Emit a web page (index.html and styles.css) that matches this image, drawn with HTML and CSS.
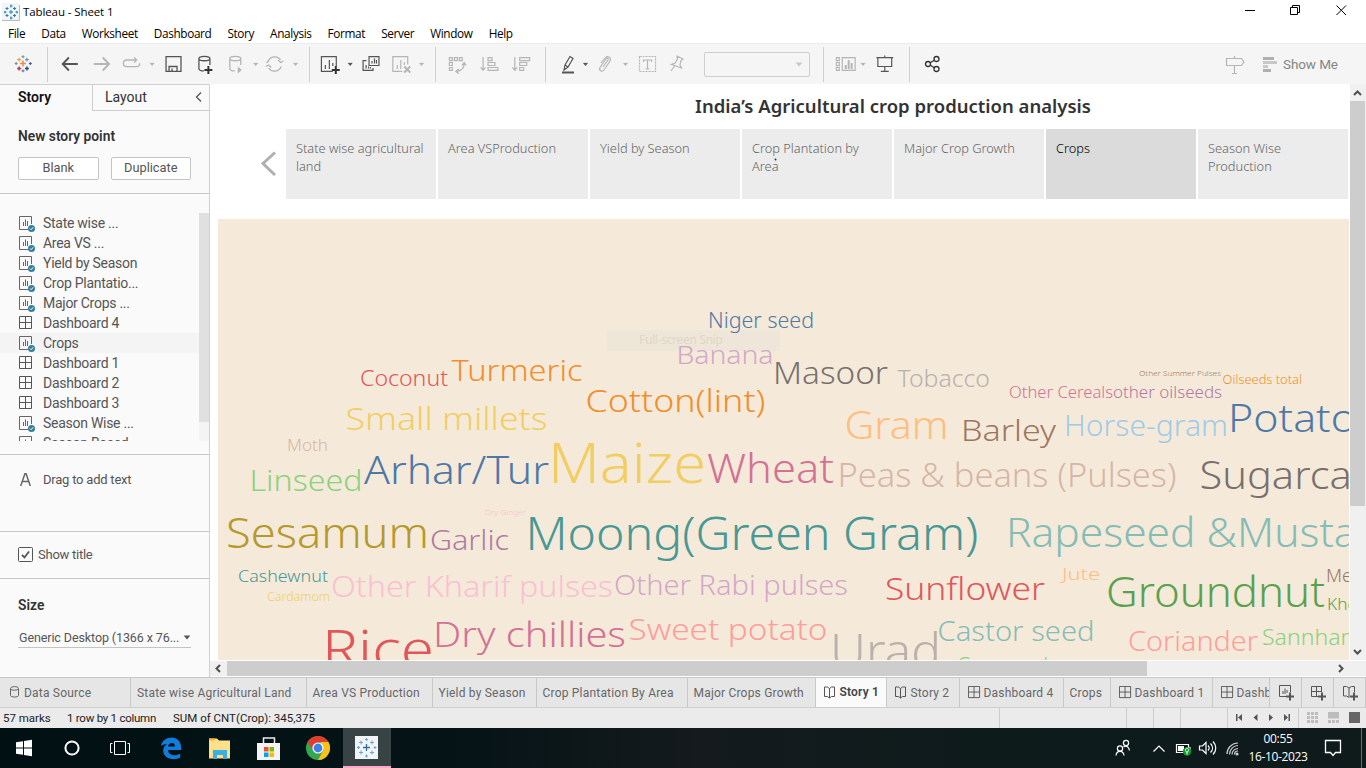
FILE: index.html
```html
<!DOCTYPE html>
<html lang="en">
<head>
<meta charset="utf-8">
<title>Tableau - Sheet 1</title>
<link rel="stylesheet" href="styles.css">
</head>
<body>
<svg class="defs" width="0" height="0">
  <defs>
    <symbol id="sheet" viewBox="0 0 17 17"><path d="M9 13.500H.5V.500h12V8" fill="none" stroke="#666"/><path d="M4.500 6v4M6.500 3.500V10M8.500 5v5" stroke="#666"/><circle cx="12.500" cy="12.500" r="3.500" fill="#367e9f"/><path d="M11 12.500l1.200 1.200 2-2.400" stroke="#fff" fill="none"/></symbol>
    <symbol id="dash" viewBox="0 0 17 17"><path d="M.5.500h12v12H.500zM6.500.500v12M.500 6.500h12" fill="none" stroke="#555"/></symbol>
    <symbol id="book" viewBox="0 0 12 13"><path d="M.5 1h3l2 1.500 2-1.500h3v9.500h-3l-2 1.500-2-1.500h-3zM5.500 2.500V12" fill="none" stroke="#555"/></symbol>
    <symbol id="caret" viewBox="0 0 6 4"><path d="M.3.300h5.400L3 3.600z"/></symbol>
  </defs>
</svg>
<div class="app">
  <header class="titlebar">
    <svg width="18" height="18" viewBox="0 0 18 18"><path d="M0 0h17v17H0z" fill="#f2f5f7"/><path d="M17.500 2v15.500H0" fill="none" stroke="#bbb"/><path d="M7 9h4M9 7v4M3.500 5.500h3M5 4v3M11 5.500h3M12.500 4v3M3.500 12.500h3M5 11v3M11 12.500h3M12.500 11v3M2 9h2.500M3 8v2.500M13.500 9H16M15 8v2.500M8 3h2.500M9 1.500V4.500M8 15h2.500M9 13.500v3" stroke="#2f7cab"/></svg>
    <span class="apptitle">Tableau - Sheet 1</span>
    <svg class="winctl" width="110" height="22" viewBox="1240 0 110 22" fill="none" stroke="#000"><path d="M1245 10.500h10M1290.500 7.500h7v7h-7zM1292.500 7V5.500h7v7H1298M1336.500 5.500l9.500 9.500M1346 5.500l-9.500 9.500"/></svg>
  </header>
  <nav class="menu"><span>File</span><span>Data</span><span>Worksheet</span><span>Dashboard</span><span>Story</span><span>Analysis</span><span>Format</span><span>Server</span><span>Window</span><span>Help</span></nav>

  <div class="toolbar">
    <svg class="grp" width="48" height="35" viewBox="0 47 48 35" fill="none" stroke-width="1.200"><path d="M20.500 63.500h6M23.500 60.500v6" stroke="#eb8a44" stroke-width="1.500"/><path d="M17.500 59.500h4M19.500 57.500v4" stroke="#eba045"/><path d="M25.500 59.500h4M27.500 57.500v4" stroke="#7c91b0"/><path d="M17.500 68.500h4M19.500 66.500v4" stroke="#c0334a" stroke-width="1.500"/><path d="M25.500 68.500h4M27.500 66.500v4" stroke="#2b487c" stroke-width="1.500"/><path d="M15 63.500h3M16.500 62v3" stroke="#5c9ba6"/><path d="M29.500 63.500h3M31 62v3" stroke="#4a5a9a"/><path d="M22 56.500h3M23.500 55v3" stroke="#6aa3ad"/><path d="M22 71h3M23.500 69.500v3" stroke="#7277b5"/></svg>
    <svg class="grp" width="262" height="35" viewBox="48 47 262 35" fill="none" stroke="#b5b5b5" stroke-width="1.300">
      <path d="M78 64H63M69 57.500L62.700 64 69 70.500" stroke="#555" stroke-width="1.900"/>
      <path d="M94 64h15M103 57.500l6.300 6.500-6.300 6.500" stroke-width="1.900"/>
      <path d="M133 60h-6a3.300 3.300 0 0 0 0 6.700h10a3.300 3.300 0 0 0 3-3.500M131 60h6M134.500 57.500L137 60l-2.500 2.500"/>
      <path d="M166.500 56.500h15v15h-15zM169.500 71v-4.500h8V71M172.500 68.500V71" stroke="#555"/>
      <path d="M199.500 58.500v10c0 1.500 2 2.500 5 2.500M210.500 58.500V65M199.500 58.500c0-3 11-3 11 0s-11 3-11 0" stroke="#555"/><path d="M205 70h8M209 66v8" stroke="#333" stroke-width="2"/>
      <path d="M230.500 58.500v10c0 1.500 2 2.500 5 2.500M241.500 58.500V65M230.500 58.500c0-3 11-3 11 0s-11 3-11 0"/><path d="M238.500 66.500v7l4-3.500z" fill="#b5b5b5" stroke="none"/>
      <path d="M269 61.500a7 7 0 0 1 12.500-1.500M282 66.500a7 7 0 0 1-12.500 1.500M267.500 63l1.500-2M266.500 66.500l3-1.500 2.500 2.500M284.500 61l-3 1.500-2.500-2.500"/>
      <g stroke="none" fill="#b5b5b5"><use href="#caret" x="149.500" y="62.500" width="6" height="4"/><use href="#caret" x="253.500" y="62.500" width="6" height="4"/><use href="#caret" x="293.500" y="62.500" width="6" height="4"/></g>
    </svg>
    <svg class="grp" width="126" height="35" viewBox="310 47 126 35" fill="none" stroke="#555" stroke-width="1.200">
      <path d="M333 71.500h-11.500v-15h15v10M325.500 65v4M329.500 60v9M333 63v3"/><path d="M332 70h8M336 66v8" stroke="#333" stroke-width="2"/>
      <path d="M369.500 56.500h10v9h-10zM372.500 61v2.500M375 58.500v5M377 60v3.500M367 60.500h-3.500v10h10V68M366.500 65v3.500M369 66.500v2M371 67v1.500"/>
      <g stroke="#b5b5b5"><path d="M403 71.500h-9.500v-15h15v8M398 65v4M401.500 60v9M405 62v3"/><path d="M405 66.500l6 6M411 66.500l-6 6" stroke-width="2"/></g>
      <g stroke="none"><use href="#caret" x="347.500" y="62.500" width="6" height="4" fill="#555"/><use href="#caret" x="419.500" y="62.500" width="6" height="4" fill="#b5b5b5"/></g>
    </svg>
    <svg class="grp" width="110" height="35" viewBox="436 47 110 35" fill="none" stroke="#b5b5b5" stroke-width="1.200">
      <path d="M449.500 57.500h3v3h-3zM454.500 57.500h3v3h-3zM459.500 57.500h3v3h-3zM449.500 62.500h3v3h-3zM449.500 67.500h3v3h-3zM464.500 63c0 5-3 8-8 8.500M462 65.500l2.500-3 2 3M459 69l-3 2.500 3 2"/>
      <path d="M483.500 57v13M481 67.500l2.500 3 2.500-3M488.500 57.500h4v3h-4zM488.500 62.500h7v3h-7zM488.500 67.500h10v3h-10z"/>
      <path d="M515.500 57v13M513 67.500l2.500 3 2.500-3M520.500 57.500h10v3h-10zM520.500 62.500h7v3h-7zM520.500 67.500h4v3h-4z"/>
    </svg>
    <svg class="grp pens" width="159" height="35" viewBox="546 47 159 35" fill="none" stroke="#b5b5b5" stroke-width="1.200">
      <path d="M564 70l1-5 5-8.500 3 2-5 8.500zM565 65l3 2" stroke="#555"/><path d="M562 72.500h12" stroke="#555" stroke-width="2"/>
      <path d="M601 63l4-5c2-3 7-.5 5 3l-6 9c-2 2.500-5.500.5-4-2.500l6-8.500c1-1.500 3-.5 2 1l-5 7"/>
      <path d="M639.500 56.500h16v15h-16z" stroke-dasharray="2 1"/><path d="M643.500 62v-2h8v2M647.500 60v9M645.500 69h4"/>
      <path d="M677 56l6 3-2 1.500-1 4.500 1.500 3-10-3.500 3.500-1.500 2.500-4zM674.500 66l-3.500 5"/>
      <g stroke="none"><use href="#caret" x="582.500" y="62.500" width="6" height="4" fill="#555"/><use href="#caret" x="622.500" y="62.500" width="6" height="4" fill="#b5b5b5"/></g>
    </svg>
    <div class="fitbox"><svg width="8" height="5" viewBox="0 0 6 4" fill="#c9c9c9"><use href="#caret"/></svg></div>
    <svg class="grp" width="86" height="35" viewBox="824 47 86 35" fill="none" stroke="#b5b5b5" stroke-width="1.200">
      <path d="M836.500 57.500h3v3h-3zM836.500 62.500h3v3h-3zM836.500 67.500h3v3h-3zM842.500 57.500h13v13h-13z"/><path d="M846 65v4M849 60v9M852 63v6" stroke-width="2"/>
      <path d="M877 57.500h17M885.500 55.500v2M878.500 58v8.500h14V58M885.500 67v4.500M881.500 71.500h8" stroke="#555"/>
      <use href="#caret" x="860.500" y="62.500" width="6" height="4" fill="#b5b5b5" stroke="none"/>
    </svg>
    <svg width="40" height="35" viewBox="910 47 40 35" fill="none" stroke="#333" stroke-width="1.300"><circle cx="928" cy="64" r="2.500"/><circle cx="936.500" cy="59" r="2.500"/><circle cx="936.500" cy="69" r="2.500"/><path d="M930.300 62.800l4-2.500M930.300 65.300l4 2.500"/></svg>
    <div class="showme">
      <svg width="54" height="35" viewBox="1225 47 54 35" fill="none" stroke="#b5b5b5" stroke-width="1.200"><path d="M1226.500 57.500h15l2.500 3.500-2.500 3.500h-15zM1234.500 55v2M1234.500 65v7.500M1232 72.500h5"/><path d="M1263 57.500h11M1263 69.500h8" stroke-width="3" stroke="#b0b0b0"/><path d="M1263 61.500h14M1263 65.500h5" stroke-width="3" stroke="#c8c8c8"/></svg>
      <span>Show Me</span>
    </div>
  </div>

  <main class="main">
    <aside class="side">
      <div class="sidetabs"><div class="st on">Story</div><div class="st off"><span>Layout</span><svg width="8" height="12" viewBox="0 0 8 12" fill="none" stroke="#555" stroke-width="1.300"><path d="M6 1.500L1.500 6 6 10.500"/></svg></div></div>
      <section class="newpoint"><h3>New story point</h3><div class="btns"><button>Blank</button><button>Duplicate</button></div></section>
      <section class="sheets">
        <ul>
          <li><svg><use href="#sheet"/></svg>State wise ...</li>
          <li><svg><use href="#sheet"/></svg>Area VS ...</li>
          <li><svg><use href="#sheet"/></svg>Yield by Season</li>
          <li><svg><use href="#sheet"/></svg>Crop Plantatio...</li>
          <li><svg><use href="#sheet"/></svg>Major Crops ...</li>
          <li><svg><use href="#dash"/></svg>Dashboard 4</li>
          <li class="hover"><svg><use href="#sheet"/></svg>Crops</li>
          <li><svg><use href="#dash"/></svg>Dashboard 1</li>
          <li><svg><use href="#dash"/></svg>Dashboard 2</li>
          <li><svg><use href="#dash"/></svg>Dashboard 3</li>
          <li><svg><use href="#sheet"/></svg>Season Wise ...</li>
          <li><svg><use href="#sheet"/></svg>Season Based</li>
        </ul>
        <div class="listbar"><i></i></div>
      </section>
      <section class="drag"><svg width="11" height="13" viewBox="0 0 11 13" fill="none" stroke="#666" stroke-width="1.500"><path d="M.7 13L5 .5h1L10.300 13M2.200 8.500h6.600"/></svg><span>Drag to add text</span></section>
      <section class="showtitle"><svg width="15" height="15" viewBox="0 0 15 15" fill="none" stroke="#555"><rect x=".5" y=".5" width="14" height="14" rx="1"/><path d="M4 8l2.500 2.500L11 4.500" stroke-width="1.800"/></svg><span>Show title</span></section>
      <section class="size"><h3>Size</h3><div class="drop"><span>Generic Desktop (1366 x 76...</span><svg width="8" height="5" viewBox="0 0 6 4" fill="#555"><use href="#caret"/></svg></div></section>
    </aside>

    <div class="canvas">
      <div class="view">
        <h1>India’s Agricultural crop production analysis</h1>
        <div class="points">
          <svg class="prev" width="68" height="70" viewBox="218 129 68 70" fill="none" stroke="#b0b0b0" stroke-width="3"><path d="M275 152.500L263 163.500l12 11.500"/></svg>
          <div class="pt">State wise agricultural land</div><div class="pt">Area VSProduction</div><div class="pt">Yield by Season</div><div class="pt">Crop Plantation by Area</div><div class="pt">Major Crop Growth</div><div class="pt sel">Crops</div><div class="pt">Season Wise Production</div>
        </div>
        <svg class="cloud" width="1131" height="441" viewBox="218 219 1131 441">
          <rect x="607" y="330" width="173" height="21" fill="#eee6d9"/>
          <text x="639" y="344" font-size="12" textLength="84" fill="#dfd7c6">Full-screen Snip</text>
          <g class="words">
          <text x="708" y="328" font-size="21" textLength="106" lengthAdjust="spacingAndGlyphs" fill="#4e79a7">Niger seed</text>
          <text x="360" y="386" font-size="22" textLength="88" lengthAdjust="spacingAndGlyphs" fill="#e15759">Coconut</text>
          <text x="451.500" y="381" font-size="30" textLength="131" lengthAdjust="spacingAndGlyphs" fill="#f28e2b">Turmeric</text>
          <text x="676.500" y="364" font-size="26" textLength="97" lengthAdjust="spacingAndGlyphs" fill="#d4a6c8">Banana</text>
          <text x="585.500" y="412" font-size="32" textLength="180" lengthAdjust="spacingAndGlyphs" fill="#f28e2b">Cotton(lint)</text>
          <text x="345.500" y="429.500" font-size="31.500" textLength="202" lengthAdjust="spacingAndGlyphs" fill="#f1ce63">Small millets</text>
          <text x="287" y="451" font-size="15.500" textLength="41" lengthAdjust="spacingAndGlyphs" fill="#d7b5a6">Moth</text>
          <text x="249.500" y="491" font-size="30" textLength="113" lengthAdjust="spacingAndGlyphs" fill="#8cd17d">Linseed</text>
          <text x="364" y="484" font-size="39" textLength="185" lengthAdjust="spacingAndGlyphs" fill="#4e79a7">Arhar/Tur</text>
          <text x="548" y="482.500" font-size="55" textLength="158" lengthAdjust="spacingAndGlyphs" fill="#f1ce63">Maize</text>
          <text x="707" y="482.500" font-size="41" textLength="127" lengthAdjust="spacingAndGlyphs" fill="#d37295">Wheat</text>
          <text x="773" y="384" font-size="32" textLength="115" lengthAdjust="spacingAndGlyphs" fill="#79706e">Masoor</text>
          <text x="897.500" y="387" font-size="24" textLength="92.500" lengthAdjust="spacingAndGlyphs" fill="#bab0ac">Tobacco</text>
          <text x="1139" y="376" font-size="8" textLength="82" lengthAdjust="spacingAndGlyphs" fill="#9d7660">Other Summer Pulses</text>
          <text x="1222.500" y="384" font-size="12" textLength="79.500" lengthAdjust="spacingAndGlyphs" fill="#f28e2b">Oilseeds total</text>
          <text x="1009" y="398" font-size="15.500" textLength="104" lengthAdjust="spacingAndGlyphs" fill="#d37295">Other Cereals</text>
          <text x="1113" y="398" font-size="15.500" textLength="109" lengthAdjust="spacingAndGlyphs" fill="#b07aa1">other oilseeds</text>
          <text x="844.500" y="439" font-size="38" textLength="104" lengthAdjust="spacingAndGlyphs" fill="#ffbe7d">Gram</text>
          <text x="961" y="441" font-size="30" textLength="95" lengthAdjust="spacingAndGlyphs" fill="#9d7660">Barley</text>
          <text x="1064" y="436" font-size="29" textLength="164" lengthAdjust="spacingAndGlyphs" fill="#a0cbe8">Horse-gram</text>
          <text x="1228" y="432" font-size="38.500" textLength="128" lengthAdjust="spacingAndGlyphs" fill="#4e79a7">Potato</text>
          <text x="837.500" y="487" font-size="32.500" textLength="339" lengthAdjust="spacingAndGlyphs" fill="#d7b5a6">Peas &amp; beans (Pulses)</text>
          <text x="1199.500" y="489" font-size="39" textLength="200" lengthAdjust="spacingAndGlyphs" fill="#79706e">Sugarcane</text>
          <text x="226" y="548" font-size="42" textLength="203" lengthAdjust="spacingAndGlyphs" fill="#b6992d">Sesamum</text>
          <text x="430" y="550" font-size="27" textLength="79" lengthAdjust="spacingAndGlyphs" fill="#b07aa1">Garlic</text>
          <text x="485" y="515" font-size="8" textLength="41" lengthAdjust="spacingAndGlyphs" fill="#fabfd2">Dry Ginger</text>
          <text x="525.500" y="550" font-size="45.500" textLength="453" lengthAdjust="spacingAndGlyphs" fill="#499894">Moong(Green Gram)</text>
          <text x="1006" y="547" font-size="40" textLength="392" lengthAdjust="spacingAndGlyphs" fill="#86bcb6">Rapeseed &amp;Mustard</text>
          <text x="238" y="582" font-size="16" textLength="90" lengthAdjust="spacingAndGlyphs" fill="#499894">Cashewnut</text>
          <text x="267" y="601" font-size="12" textLength="63" lengthAdjust="spacingAndGlyphs" fill="#f1ce63">Cardamom</text>
          <text x="331" y="597" font-size="30" textLength="282" lengthAdjust="spacingAndGlyphs" fill="#fabfd2">Other Kharif pulses</text>
          <text x="614" y="595" font-size="27.500" textLength="234" lengthAdjust="spacingAndGlyphs" fill="#d4a6c8">Other Rabi pulses</text>
          <text x="885" y="600" font-size="31.500" textLength="160" lengthAdjust="spacingAndGlyphs" fill="#e15759">Sunflower</text>
          <text x="1062" y="580" font-size="17" textLength="38" lengthAdjust="spacingAndGlyphs" fill="#ffbe7d">Jute</text>
          <text x="1106" y="607" font-size="42.500" textLength="219" lengthAdjust="spacingAndGlyphs" fill="#59a14f">Groundnut</text>
          <text x="1326" y="582" font-size="18.500" textLength="51" lengthAdjust="spacingAndGlyphs" fill="#9d7660">Mesta</text>
          <text x="1327" y="610" font-size="16" textLength="58" lengthAdjust="spacingAndGlyphs" fill="#59a14f">Khesari</text>
          <text x="322" y="668" font-size="53" textLength="112" lengthAdjust="spacingAndGlyphs" fill="#e15759">Rice</text>
          <text x="433" y="646.500" font-size="35" textLength="193" lengthAdjust="spacingAndGlyphs" fill="#d37295">Dry chillies</text>
          <text x="628.500" y="640" font-size="30" textLength="199" lengthAdjust="spacingAndGlyphs" fill="#ff9d9a">Sweet potato</text>
          <text x="830" y="668" font-size="48" textLength="111" lengthAdjust="spacingAndGlyphs" fill="#bab0ac">Urad</text>
          <text x="937.500" y="641" font-size="27.500" textLength="157" lengthAdjust="spacingAndGlyphs" fill="#86bcb6">Castor seed</text>
          <text x="1128" y="651" font-size="28" textLength="130" lengthAdjust="spacingAndGlyphs" fill="#ff9d9a">Coriander</text>
          <text x="1262" y="645" font-size="22" textLength="113" lengthAdjust="spacingAndGlyphs" fill="#8cd17d">Sannhamp</text>
          <text x="957" y="673" font-size="22" textLength="91" lengthAdjust="spacingAndGlyphs" fill="#8cd17d">Guar seed</text>
          </g>
        </svg>
      </div>
      <div class="vbar"><svg width="15" height="17" viewBox="0 0 15 17" class="arr"><path d="M4 11l3.500-3.500L11 11"/></svg><i></i><svg width="15" height="17" viewBox="0 0 15 17" class="arr"><path d="M4 7l3.500 3.500L11 7"/></svg></div>
      <div class="hbar"><svg width="17" height="15" viewBox="0 0 17 15" class="arr"><path d="M10 4L6.500 7.500 10 11"/></svg><i></i><svg width="17" height="15" viewBox="0 0 17 15" class="arr"><path d="M6 4l3.500 3.500L6 11"/></svg></div>
      <div class="corner"></div>
      <svg class="dot" width="3" height="3"><circle cx="1.500" cy="1.500" r="1" fill="#333"/></svg>
    </div>
  </main>

  <div class="tabs">
    <div class="tab t1"><svg width="9" height="12" viewBox="0 0 9 12" fill="none" stroke="#666"><path d="M.5 2.500v7c0 2 8 2 8 0v-7c0-2.500-8-2.500-8 0s8 2 8 0"/></svg><span>Data Source</span></div>
    <div class="tab t2"><span>State wise Agricultural Land</span></div>
    <div class="tab t3"><span>Area VS Production</span></div>
    <div class="tab t4"><span>Yield by Season</span></div>
    <div class="tab t5"><span>Crop Plantation By Area</span></div>
    <div class="tab t6"><span>Major Crops Growth</span></div>
    <div class="tab t7 cur"><svg width="12" height="13"><use href="#book"/></svg><span>Story 1</span></div>
    <div class="tab t8"><svg width="12" height="13"><use href="#book"/></svg><span>Story 2</span></div>
    <div class="tab t9"><svg width="13" height="13" viewBox="0 0 14 14"><use href="#dash" width="17" height="17"/></svg><span>Dashboard 4</span></div>
    <div class="tab t10"><span>Crops</span></div>
    <div class="tab t11"><svg width="13" height="13" viewBox="0 0 14 14"><use href="#dash" width="17" height="17"/></svg><span>Dashboard 1</span></div>
    <div class="tab t12"><svg width="13" height="13" viewBox="0 0 14 14"><use href="#dash" width="17" height="17"/></svg><span>Dashboard 2</span></div>
    <div class="tab add"><svg width="17" height="16" viewBox="0 0 17 16" fill="none" stroke="#555"><path d="M8 11.500H1.500V.500h11V7M5 6v3M7 3.500V9M9 5v3"/><path d="M8 11.500h8M12 7.500v8" stroke-width="2"/></svg></div>
    <div class="tab add"><svg width="17" height="16" viewBox="0 0 17 16" fill="none" stroke="#555"><path d="M8 11.500H1.500V1.500h10V7M6.500 1.500v10M1.500 6.500h10"/><path d="M8 11.500h8M12 7.500v8" stroke-width="2"/></svg></div>
    <div class="tab add"><svg width="17" height="16" viewBox="0 0 17 16" fill="none" stroke="#555"><path d="M7 12.500L4.500 11h-3V1.500h3L7 3l2.500-1.500h3V7M7 3v9.500"/><path d="M8 11.500h8M12 7.500v8" stroke-width="2"/></svg></div>
  </div>

  <div class="status">
    <span class="s1">57 marks</span><span class="s2">1 row by 1 column</span><span class="s3">SUM of CNT(Crop): 345,375</span>
    <svg width="367" height="20" viewBox="999 708 367 20" fill="#555"><path d="M999.500 708v20M1126.500 708v20M1153.500 708v20M1180.500 708v20M1227.500 708v20M1298.500 708v20" stroke="#ccc"/><path d="M1236 714h1.500v7h-1.500zM1242 714v7l-4-3.500zM1257.500 714v7l-4-3.500zM1269 714v7l4-3.500zM1284 714v7l4-3.500zM1288.500 714h1.500v7h-1.500z"/><path d="M1307 712h3v3h-3zM1311 712h3v3h-3zM1315 712h3v3h-3zM1307 716h3v3h-3zM1311 716h3v3h-3zM1315 716h3v3h-3zM1307 720h3v3h-3zM1311 720h3v3h-3zM1315 720h3v3h-3zM1328 712h11v6.500h-11zM1328 720h3v3h-3zM1332 720h3v3h-3zM1336 720h3v3h-3z" fill="#bdbdbd"/><path d="M1349 712h11v11h-11z" fill="#666"/></svg>
  </div>

  <footer class="taskbar">
    <svg width="400" height="40" viewBox="0 728 400 40">
      <path d="M16 742.200l7-1v6.300h-7zM24 741l8-1.200v7.700h-8zM16 748.500h7v6.300l-7-1zM24 748.500h8v7.700l-8-1.200z" fill="#fff"/>
      <circle cx="72" cy="748" r="6.600" fill="none" stroke="#fff" stroke-width="2"/>
      <path d="M114.500 741.500h11v13h-11zM112.500 743.500h-2v9h2M127.500 743.500h2v9h-2" fill="none" stroke="#fff"/>
      <path d="M161 746c2-11 20-12 20.200 2v2h-13c0 6 8 6.500 12 3.500v4c-6 3.500-17 1.500-17-7 0-3 2-5.500 4-6.500-3 0-5 1-6.200 2zM168 746.500h7c0-5-6.500-4.500-7 0z" fill="#0f7ddb"/>
      <path d="M209 738.500h8l2 2h11v18h-21z" fill="#ffe08a"/><path d="M209 738.500h6v2h-6z" fill="#f0b93b"/><path d="M213 759v-9h14v9h-4v-4h-6v4z" fill="#3ab0e2"/>
      <path d="M257 743h23v17h-23z" fill="#f3f3f3"/><path d="M263.500 743v-5h11v5" fill="none" stroke="#eee" stroke-width="1.500"/><path d="M264 747h4.500v4.500H264z" fill="#f25022"/><path d="M269.500 747h4.500v4.500h-4.500z" fill="#7fba00"/><path d="M264 752.500h4.500v4.500H264z" fill="#00a4ef"/><path d="M269.500 752.500h4.500v4.500h-4.500z" fill="#ffb900"/>
      <circle cx="318" cy="748" r="12" fill="#33a652"/><path d="M307.600 742a12 12 0 0 1 20.800 0H318l-5 8z" fill="#e33b2e"/><path d="M328.400 742a12 12 0 0 1-10.400 18l5.500-10-3-8z" fill="#fbc116"/><circle cx="318" cy="748" r="5.600" fill="#fff"/><circle cx="318" cy="748" r="4.400" fill="#3f7fe8"/>
      <path d="M343 728h48v38h-48z" fill="#374344"/><path d="M343 766h48v2h-48z" fill="#ffa9c4"/><path d="M355 736h23v23h-23z" fill="#f2f5f8"/>
      <path d="M363 747.500h7M366.500 744v7" stroke="#2f6f9f" stroke-width="1.300"/><path d="M359 742.500h4M361 740.500v4M370 742.500h4M372 740.500v4M359 752.500h4M361 750.500v4M370 752.500h4M372 750.500v4M357 747.500h3M358.500 746v3M373.500 747.500h3M375 746v3M365 739.500h3M366.500 738v3M365 756h3M366.500 754.500v3" stroke="#6aa6cf"/>
    </svg>
    <svg class="tray" width="126" height="40" viewBox="1115 728 126 40" fill="none" stroke="#fff" stroke-width="1.200">
      <circle cx="1120" cy="748.500" r="2.600"/><path d="M1116 755.500c.5-5.500 7.500-5.500 8 0"/><circle cx="1126" cy="743" r="2.600"/><path d="M1123.500 747c3-2 5.500 0 6 3.500"/>
      <path d="M1153.500 751.500l5.500-5.500 5.500 5.500"/>
      <path d="M1176.500 744.500h12v8h-12zM1190 747v3"/><path d="M1178 746h6v5h-6z" fill="#fff" stroke="none"/><circle cx="1187" cy="751.500" r="4.200" fill="#139a2c" stroke="none"/><path d="M1187 754.500v-3M1185.500 750.500c0-2 1.500-2.500 1.500-2.500s1.500.5 1.500 2.500-3 2-3 0" stroke-width=".9"/>
      <path d="M1199.500 746v4h3l3.500 3.500v-11l-3.500 3.500zM1208 745.500c1.500 1.500 1.500 3.500 0 5M1210.500 743.500c2.700 2.700 2.700 6.300 0 9M1213 741.500c3.700 3.700 3.700 9.300 0 13"/>
      <g stroke="#ccc"><path d="M1227 754c0-6 5-11 11-11M1229.500 754.500c0-5 4-9 8.500-9M1232 754.500c0-3.500 3-6 6-6M1234.500 754.500c0-2 1.500-3.500 3.500-3.500"/><circle cx="1237" cy="754" r="1" fill="#fff"/></g>
    </svg>
    <div class="clock"><span>00:55</span><span>16-10-2023</span></div>
    <svg width="48" height="40" viewBox="1318 728 48 40" fill="none" stroke="#fff" stroke-width="1.300"><path d="M1325.500 740.500h15v12h-5l-2.500 3-2.500-3h-5z"/><path d="M1361.500 728v40" stroke="#67716f" stroke-width="1"/></svg>
  </footer>
</div>
</body>
</html>
```
FILE: styles.css
```css
* { box-sizing: border-box; }
body { margin: 0; background: #fff; overflow: hidden; font-family: Roboto, "Liberation Sans", sans-serif; color: #333; }
svg { display: block; flex: none; }
.defs { position: absolute; }
h1, h3, ul { margin: 0; padding: 0; }
.app { width: 1366px; height: 768px; display: flex; flex-direction: column; }

.titlebar { height: 24px; display: flex; padding: 3px 16px 0 2px; font: 11.500px/18px "Open Sans", sans-serif; color: #000; }
.apptitle { margin-left: 3px; flex: 1; letter-spacing: -.1px; }
.winctl { margin-top: -3px; }
.menu { height: 19px; display: flex; gap: 16px; padding-left: 8px; font: 11.800px/19px "Open Sans", sans-serif; color: #000; letter-spacing: -.36px; }

.toolbar { height: 41px; background: #f5f5f5; border-top: 1px solid #ececec; display: flex; padding-top: 3px; }
.grp { border-right: 1px solid #cfcfcf; }
.fitbox { width: 119px; height: 35px; border-right: 1px solid #cfcfcf; position: relative; display: flex; align-items: center; padding-left: 90px; }
.fitbox::before { content: ""; position: absolute; left: -1px; top: 5px; width: 104px; height: 23px; border: 1px solid #cfcfcf; border-radius: 2px; }
.fitbox svg { margin-top: -1px; }
.toolbar .pens { border-right: 0; }
.showme { margin-left: auto; display: flex; align-items: center; gap: 4px; margin-right: 28px; font-size: 13.500px; color: #858585; line-height: 35px; }
.showme span { margin-top: -3px; width: 55px; letter-spacing: -.1px; white-space: nowrap; }

.main { height: 593px; display: flex; }
.side { width: 210px; background: #fafafa; border-right: 1px solid #d0d0d0; border-top: 1px solid #d0d0d0; display: flex; flex-direction: column; font-size: 13px; }
.side h3 { font-size: 13.800px; font-weight: 600; line-height: 16px; color: #333; }
.sidetabs { display: flex; height: 26px; font-size: 14px; line-height: 25px; }
.st.on { width: 92px; padding-left: 18px; font-weight: 600; color: #111; }
.st.off { flex: 1; border-left: 1px solid #cfcfcf; border-bottom: 1px solid #cfcfcf; padding: 0 6px 0 12px; display: flex; justify-content: space-between; }
.st.off svg { margin-top: 6px; }
.newpoint { height: 83px; border-bottom: 1px solid #c8c8c8; padding: 17px 18px 0; }
.btns { display: flex; gap: 12px; margin-top: 13px; }
.btns button { width: 81px; height: 23px; padding: 0 0 1px; background: #fff; border: 1px solid #c4c4c4; border-radius: 2px; font: 12.800px/20px Roboto, sans-serif; color: #555; }
.sheets { height: 261px; border-bottom: 1px solid #c8c8c8; padding-top: 19px; display: flex; }
.sheets ul { width: 199px; height: 228px; overflow: hidden; list-style: none; }
.sheets li { height: 20px; padding-left: 19px; display: flex; font-size: 14px; letter-spacing: -.27px; line-height: 21px; color: #555; }
.sheets li svg { width: 17px; height: 17px; margin: 3px 7px 0 0; }
.sheets li.hover { background: #f4f4f4; }
.listbar { width: 10px; height: 228px; background: #f4f4f4; }
.listbar i { display: block; height: 209px; background: #e0e0e0; }
.drag { height: 77px; border-bottom: 1px solid #c8c8c8; display: flex; gap: 12px; padding: 18px 0 0 20px; line-height: 14px; color: #555; letter-spacing: -.22px; }
.showtitle { height: 47px; border-bottom: 1px solid #c8c8c8; display: flex; gap: 5px; padding: 15px 0 0 18px; line-height: 16px; color: #555; letter-spacing: -.25px; }
.size { padding: 18px 18px 0; }
.drop { display: flex; justify-content: space-between; align-items: center; margin-top: 14px; height: 21px; border-bottom: 1px solid #c4c4c4; white-space: nowrap; font-size: 12.500px; color: #555; padding-left: 1px; letter-spacing: -.1px; }

.canvas { flex: 1; display: grid; grid-template-columns: 1140px 16px; grid-template-rows: 576px 17px; position: relative; }
.view { padding: 0 0 0 8px; overflow: hidden; }
.view h1 { width: 1350px; text-align: center; font: 600 18.500px/43px "Noto Sans", sans-serif; height: 45px; color: #333; }
.points { display: flex; gap: 2px; height: 90px; }
.prev { margin-right: -2px; }
.pt { width: 150px; height: 70px; background: #ececec; padding: 10px 8px 0 10px; font: 300 12.800px/18px "Noto Sans", sans-serif; color: #666; flex: none; }
.pt.sel { background: #dbdbdb; color: #000; }
.cloud { background: #f5ead9; font-family: "Noto Sans", sans-serif; }
.words { font-weight: 300; }
.vbar { background: #f0f0f0; display: flex; flex-direction: column; }
.vbar i { height: 405px; background: #cdcdcd; margin-right: 1px; }
.vbar svg:last-child { margin-top: auto; }
.hbar { background: #f0f0f0; display: flex; height: 15px; margin-top: 1px; }
.hbar i { width: 920px; background: #cdcdcd; }
.hbar svg:last-child { margin-left: auto; }
.arr { fill: none; stroke: #505050; stroke-width: 2; }
.corner { background: #f0f0f0; margin-top: 1px; height: 15px; }
.dot { position: absolute; left: 564px; top: 74px; }

.tabs { height: 31px; background: #e6e6e6; border-top: 1px solid #c8c8c8; border-bottom: 1px solid #cfcfcf; display: flex; font-size: 12px; line-height: 30px; color: #666; white-space: nowrap; }
.tab { border-right: 1px solid #c8c8c8; padding-left: 5.500px; display: flex; overflow: hidden; flex: none; letter-spacing: .2px; }
.tab svg { margin: 8px 4px 0 2px; }
.t1 { width: 131px; padding-left: 8px; } .t2 { width: 176px; padding-left: 6px; } .t3 { width: 126px; } .t4 { width: 104px; } .t5 { width: 151px; } .t6 { width: 128px; }
.t7 { width: 71px; } .t8 { width: 73px; } .t9 { width: 104px; } .t10 { width: 47px; } .t11 { width: 102px; } .t12 { width: 57px; }
.t1 svg { margin-right: 5px; }
.t9 svg, .t11 svg, .t12 svg { margin-right: 3px; }
.cur { background: #fafafa; color: #444; font-weight: 600; line-height: 28px; }
.add { width: 32px; padding-left: 8px; }
.tab.add svg { margin: 7px 0 0 0; }

.status { height: 20px; background: #ebebeb; display: flex; font-size: 11.500px; line-height: 20px; color: #222; }
.s1 { width: 67px; padding-left: 3px; } .s2 { width: 106px; letter-spacing: -.25px; } .s3 { flex: 1; }

.taskbar { height: 40px; background: linear-gradient(90deg, #001013 0, #051316 450px, #141a1d 700px, #0d1b1b 1000px, #0f1a1b); display: flex; }
.tray { margin-left: auto; }
.clock { width: 77px; display: flex; flex-direction: column; text-align: center; color: #fff; font: 12px/18px "Open Sans", sans-serif; padding: 2px 3px 0 0; letter-spacing: -.35px; }
```
